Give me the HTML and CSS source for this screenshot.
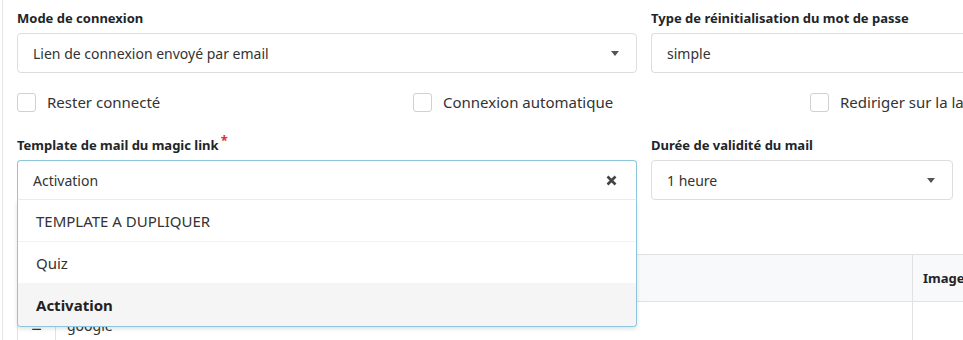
FILE: index.html
```html
<!DOCTYPE html>
<html lang="fr">
<head>
<meta charset="utf-8">
<link rel="stylesheet" href="styles.css">
</head>
<body>
<div class="page">
  <div class="row row-top">
    <div class="field field-wide">
      <label class="lbl">Mode de connexion</label>
      <div class="select">
        <span class="val">Lien de connexion envoyé par email</span>
        <span class="caret"></span>
      </div>
    </div>
    <div class="field field-right">
      <label class="lbl">Type de réinitialisation du mot de passe</label>
      <div class="select select-open-right">
        <span class="val">simple</span>
      </div>
    </div>
  </div>

  <div class="checks">
    <label class="check"><span class="box"></span>Rester connecté</label>
    <label class="check"><span class="box"></span>Connexion automatique</label>
    <label class="check"><span class="box"></span>Rediriger sur la landing page</label>
  </div>

  <div class="row row-second">
    <div class="field field-wide">
      <label class="lbl">Template de mail du magic link<span class="req">*</span></label>
      <div class="combo">
        <div class="select select-focus">
          <span class="val">Activation</span>
          <svg class="clear" width="11" height="11" viewBox="0 0 11 11"><path d="M1.5 1.5 L9.5 9.5 M9.5 1.5 L1.5 9.5" stroke="#444" stroke-width="2.6" stroke-linecap="butt"/></svg>
        </div>
        <ul class="menu">
          <li>TEMPLATE A DUPLIQUER</li>
          <li>Quiz</li>
          <li class="active">Activation</li>
        </ul>
      </div>
    </div>
    <div class="field field-mid">
      <label class="lbl">Durée de validité du mail</label>
      <div class="select">
        <span class="val">1 heure</span>
        <span class="caret"></span>
      </div>
    </div>
  </div>

  <table class="tbl">
    <thead>
      <tr><th class="c-drag"></th><th class="c-name"></th><th class="c-img">Image</th></tr>
    </thead>
    <tbody>
      <tr><td class="c-drag"><span class="burger">&#8801;</span></td><td class="c-name">google</td><td class="c-img"></td></tr>
    </tbody>
  </table>
</div>
</body>
</html>
```

FILE: styles.css
```css
html, body {
  margin: 0;
  padding: 0;
  background: #fff;
  overflow: hidden;
}
body {
  font-family: "Noto Sans", "Open Sans", sans-serif;
  color: #333;
  width: 963px;
  height: 340px;
}
.page {
  margin-left: 2px;
  border-left: 1px solid #e6e6e6;
  padding-left: 14px;
  padding-top: 8px;
  height: 340px;
  box-sizing: border-box;
  width: 1200px;
}
.row {
  display: flex;
  gap: 14px;
}
.field-wide { width: 620px; }
.field-right { width: 400px; }
.field-mid { width: 302px; }
.lbl {
  display: block;
  font-weight: 700;
  font-size: 13px;
  line-height: 20px;
  color: #212529;
  margin-bottom: 5px;
}
.req {
  color: #e03030;
  font-size: 13px;
  position: relative;
  top: -5px;
  margin-left: 2px;
}
.select {
  height: 40px;
  box-sizing: border-box;
  border: 1px solid #ddd;
  border-radius: 4px;
  display: flex;
  align-items: center;
  padding: 0 15px;
  font-size: 14px;
  color: #333;
  background: #fff;
}
.select .val { flex: 1; }
.caret {
  width: 0;
  height: 0;
  border-left: 4.5px solid transparent;
  border-right: 4.5px solid transparent;
  border-top: 5px solid #555;
  margin-right: 2px;
}
.select-open-right { border-right: none; border-radius: 4px 0 0 4px; }
.checks {
  display: grid;
  grid-template-columns: 396px 397px 396px;
  margin-top: 19px;
  height: 20px;
}
.check {
  display: flex;
  align-items: center;
  font-size: 15px;
  color: #333;
  white-space: nowrap;
}
.box {
  width: 17px;
  height: 17px;
  border: 1px solid #d0d0d0;
  border-radius: 3px;
  margin-right: 11px;
  background: #fff;
}
.row-second {
  margin-top: 23px;
}
.combo { position: relative; }
.select-focus {
  border-color: #8cc6dc;
  border-radius: 4px 4px 0 0;
  border-bottom-color: #eee;
}
.clear { margin-right: 4px; }
.menu {
  position: absolute;
  left: 0;
  top: 40px;
  width: 620px;
  box-sizing: border-box;
  margin: 0;
  padding: 0;
  list-style: none;
  background: #fff;
  border: 1px solid #8cc6dc;
  border-top: none;
  border-radius: 0 0 4px 4px;
  box-shadow: 0 2px 4px rgba(0,0,0,0.12);
  z-index: 10;
}
.menu li {
  height: 42px;
  display: flex;
  align-items: center;
  padding-left: 18px;
  font-size: 15px;
  color: #333;
  border-top: 1px solid #f2f2f2;
  box-sizing: border-box;
}
.menu li:first-child { border-top: none; height: 41px; }
.menu li.active {
  background: #f5f5f5;
  font-weight: 700;
  color: #222;
  border-top: none;
  height: 43px;
  border-radius: 0 0 4px 4px;
}
.tbl {
  margin-top: 54px;
  border-collapse: collapse;
  table-layout: fixed;
  width: 1000px;
  font-size: 13px;
}
.tbl th, .tbl td {
  border: 1px solid #e2e2e2;
  padding: 0;
}
.tbl th {
  height: 46px;
  background: #f8f9fa;
  font-weight: 700;
  text-align: left;
  color: #212529;
}
.tbl td { height: 46px; font-size: 14px; }
.c-drag { width: 37px; text-align: center !important; }
.c-name { width: 857px; padding-left: 11px !important; box-sizing: border-box; }
.c-img { padding-left: 10px !important; }
.burger { font-size: 18px; color: #333; }
```
